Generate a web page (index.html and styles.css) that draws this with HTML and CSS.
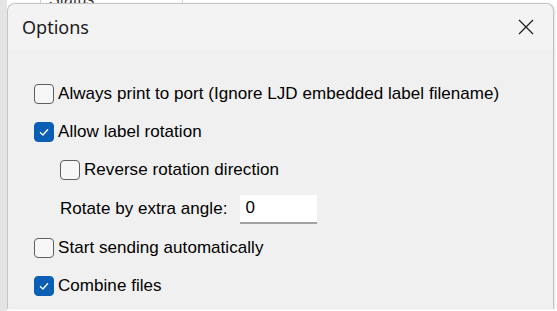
FILE: index.html
```html
<!DOCTYPE html>
<html lang="en">
<head>
  <meta charset="UTF-8" />
  <title>Options</title>
  <link rel="stylesheet" href="styles.css">
</head>
<body>

<div class="screen">
  <!-- list header behind the dialog -->
  <div class="behind">
    <span class="col col-a"></span>
    <span class="col col-b">Status</span>
  </div>

  <!-- Options dialog -->
  <div class="dialog">
    <div class="titlebar">
      <span class="title">Options</span>
      <svg class="close" width="16" height="16" viewBox="0 0 16 16">
        <path d="M1 1 L15 15 M15 1 L1 15" stroke="#1a1a1a" stroke-width="1.2" fill="none"/>
      </svg>
    </div>

    <div class="content">
      <div class="row">
        <span class="box"></span>
        <span class="label">Always print to port (Ignore LJD embedded label filename)</span>
      </div>
      <div class="row">
        <span class="box checked">
          <svg width="12" height="12" viewBox="0 0 12 12"><path d="M2 6.3 L4.9 9 L10 3.2" stroke="#fff" stroke-width="1.3" fill="none"/></svg>
        </span>
        <span class="label">Allow label rotation</span>
      </div>
      <div class="row sub">
        <span class="box"></span>
        <span class="label">Reverse rotation direction</span>
      </div>
      <div class="row sub tall">
        <span class="text">Rotate by extra angle:</span>
        <input class="field" type="text" value="0" />
      </div>
      <div class="row">
        <span class="box"></span>
        <span class="label">Start sending automatically</span>
      </div>
      <div class="row">
        <span class="box checked">
          <svg width="12" height="12" viewBox="0 0 12 12"><path d="M2 6.3 L4.9 9 L10 3.2" stroke="#fff" stroke-width="1.3" fill="none"/></svg>
        </span>
        <span class="label">Combine files</span>
      </div>
    </div>
  </div>
</div>

</body>
</html>
```

FILE: styles.css
```css
* { margin: 0; padding: 0; box-sizing: border-box; }
body {
  background: #fff;
  font-family: 'Liberation Sans', Arial, sans-serif;
  color: #000;
  overflow: hidden;
}
.screen {
  width: 557px; height: 311px;
  border-left: 7px solid #e4e4e4;
  overflow: hidden;
}
.behind {
  height: 3px;
  display: flex;
  overflow: hidden;
}
.col {
  height: 3px;
  border-right: 1px solid #d0d0d0;
  font-size: 16px;
  line-height: 2px;
  color: #333;
  overflow: hidden;
}
.col-a { width: 34px; }
.col-b { width: 142px; padding-left: 8px; line-height: 0; }
.dialog {
  width: 547px;
  height: 306px;
  background: #f0f0f0;
  border: 1px solid #c4c4c4;
  border-bottom: none;
  border-radius: 8px 8px 0 0;
  box-shadow: 1px 0 2px rgba(0,0,0,0.12);
}
.titlebar {
  height: 46px;
  background: #f3f3f3;
  border-radius: 8px 8px 0 0;
  display: flex;
  align-items: center;
  justify-content: space-between;
  padding: 0 19px 0 14px;
}
.title {
  font-family: 'Noto Sans', 'Open Sans', sans-serif;
  font-size: 18px;
  color: #1b1b1b;
  margin-top: -1px;
}
.close { margin-top: -1px; }
.content {
  padding: 25px 0 0 26px;
  display: flex;
  flex-direction: column;
}
.row {
  height: 38px;
  display: flex;
  align-items: center;
  gap: 4px;
  font-size: 17px;
}
.row.sub { padding-left: 26px; }
.row.tall { height: 40px; gap: 13px; }
.label, .text { letter-spacing: 0.05px; }
.box {
  width: 20px; height: 20px;
  border: 1px solid #5e5e5e;
  border-radius: 4px;
  background: #f7f7f7;
  display: flex;
  align-items: center;
  justify-content: center;
  flex: none;
}
.box.checked {
  background: #0a5fb4;
  border-color: #0a5fb4;
}
.field {
  width: 77px; height: 29px;
  border: none;
  border-bottom: 2px solid #a3a3a3;
  background: #fff;
  font-family: 'Liberation Sans', Arial, sans-serif;
  font-size: 17px;
  padding: 0 5px;
  outline: none;
  color: #000;
}
```
